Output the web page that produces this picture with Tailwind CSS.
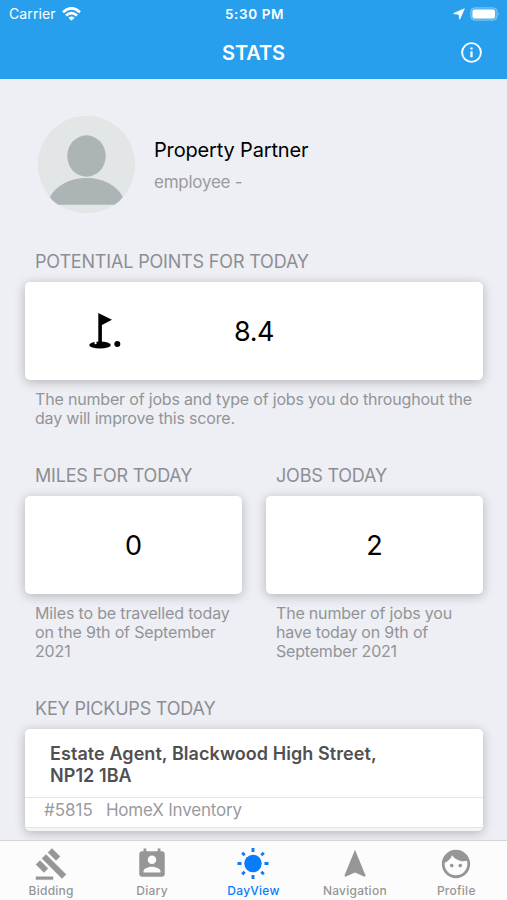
<!DOCTYPE html>
<html lang="en">
<head>
<meta charset="utf-8">
<title>Stats</title>
<script src="https://cdn.jsdelivr.net/npm/@tailwindcss/browser@4"></script>
</head>
<body class="bg-[#edeff4] font-['Inter',sans-serif]">
<div class="flex h-[900px] w-[507px] flex-col overflow-hidden">
  <header class="h-[79px] shrink-0 bg-[#279fec] text-white">
    <div class="grid h-[27px] grid-cols-3 items-center pl-[9px] pr-[7px] text-[13px]">
      <div class="flex items-center gap-[6px]">
        <span class="text-[14px] tracking-[0.1px]">Carrier</span>
        <svg class="h-[14px] w-[19px]" viewBox="0 0 19 14" fill="none" stroke="white" stroke-width="2.700"><path d="M1 5.200Q9.500-2.600 18 5.200M4 8.600Q9.500 3.600 15 8.600"/><path d="M9.500 13.700L6.400 10.700Q9.500 8.200 12.600 10.700Z" fill="white" stroke="none"/></svg>
      </div>
      <span class="pt-[1px] text-center text-[13.500px] font-semibold tracking-[0.600px]">5:30 PM</span>
      <div class="flex items-center justify-end gap-[5px]">
        <svg class="h-[12px] w-[12px]" viewBox="0 0 12 12" fill="white" stroke="white" stroke-width=".8" stroke-linejoin="round"><path d="M11.300.8L6.700 11.300 6 6.300.5 5.600Z"/></svg>
        <svg class="h-[14px] w-[30px]" viewBox="0 0 30 14"><rect x=".7" y=".7" width="26.500" height="12.600" rx="4" fill="white" fill-opacity=".2" stroke="white" stroke-opacity=".3"/><rect x="2.500" y="2.500" width="22.500" height="9" rx="2" fill="white"/><path d="M28.500 4.700q1.500 2.300 0 4.600z" fill="white" fill-opacity=".4"/></svg>
      </div>
    </div>
    <div class="grid h-[52px] grid-cols-3 items-center px-[25px]">
      <span></span>
      <h1 class="text-center text-[20px] font-semibold tracking-[-0.1px]">STATS</h1>
      <svg class="relative -top-px h-[21px] w-[21px] justify-self-end" viewBox="0 0 21 21" fill="none" stroke="white" stroke-width="1.900"><circle cx="10.500" cy="10.500" r="9.400"/><path d="M10.500 9.300v6M10.500 5.400v2.200" stroke-width="2.200"/></svg>
    </div>
  </header>

  <main class="min-h-0 flex-1 overflow-hidden pt-[37px] pr-[24px] pl-[25px]">
    <section class="flex items-center gap-[19px] pl-[12px]">
      <svg class="h-[98px] w-[98px]" viewBox="0 0 98 98"><circle cx="49.500" cy="48.500" r="48.700" fill="#e2e6e7"/><ellipse cx="49.500" cy="40" rx="19.200" ry="20.700" fill="#acb4b5"/><path d="M12.800 81C19.500 69 33.500 62 49.500 62S79.500 69 85.800 81Q82.500 86 77.500 88.700H21Q16 86 12.800 81Z" fill="#acb4b5"/></svg>
      <div class="pb-[1px]">
        <p class="text-[20px] leading-[26px] tracking-[-0.160px] text-black">Property Partner</p>
        <p class="mt-[8px] text-[17px] leading-[22px] tracking-[-0.250px] text-[#9a9b9f]">employee -</p>
      </div>
    </section>

    <section class="mt-[37px]">
      <h2 class="pl-[10px] text-[18px] leading-[22px] tracking-[-0.170px] text-[#8d8e92]">POTENTIAL POINTS FOR TODAY</h2>
      <div class="mt-[9px] grid h-[98px] grid-cols-[158px_142px_158px] items-center rounded-[5px] bg-white shadow-[0_2px_11px_rgba(0,0,0,0.25)]">
        <svg class="ml-[64px] h-[36px] w-[32px]" viewBox="0 0 32 36"><ellipse cx="11" cy="32" rx="10.800" ry="3.600"/><path d="M5.500 31.200V28h2v3" fill="white"/><path d="M9.300 0L23 6.800 12.900 12V32.500H9.300Z"/><circle cx="28.300" cy="31" r="3"/></svg>
        <span class="text-center text-[27px] leading-none tracking-[-0.400px] text-black">8.4</span>
      </div>
      <p class="mt-[10px] pl-[10px] text-[16px] leading-[19px] tracking-[-0.180px] whitespace-nowrap text-[#939498]">The number of jobs and type of jobs you do throughout the<br>day will improve this score.</p>
    </section>

    <div class="mt-[37px] grid grid-cols-2 gap-[24px]">
      <section>
        <h2 class="pl-[10px] text-[18px] leading-[22px] tracking-[-0.200px] text-[#8d8e92]">MILES FOR TODAY</h2>
        <div class="mt-[9px] flex h-[98px] items-center justify-center rounded-[5px] bg-white pt-[2px] text-[27px] shadow-[0_2px_11px_rgba(0,0,0,0.25)]">0</div>
        <p class="mt-[10px] pl-[10px] text-[16px] leading-[19px] tracking-[-0.160px] whitespace-nowrap text-[#939498]">Miles to be travelled today<br>on the 9th of September<br>2021</p>
      </section>
      <section>
        <h2 class="pl-[10px] text-[18px] leading-[22px] tracking-[-0.200px] text-[#8d8e92]">JOBS TODAY</h2>
        <div class="mt-[9px] flex h-[98px] items-center justify-center rounded-[5px] bg-white pt-[2px] text-[27px] shadow-[0_2px_11px_rgba(0,0,0,0.25)]">2</div>
        <p class="mt-[10px] pl-[10px] text-[16px] leading-[19px] tracking-[-0.190px] whitespace-nowrap text-[#939498]">The number of jobs you<br>have today on 9th of<br>September 2021</p>
      </section>
    </div>

    <section class="mt-[37px]">
      <h2 class="pl-[10px] text-[18px] leading-[22px] tracking-[-0.200px] text-[#8d8e92]">KEY PICKUPS TODAY</h2>
      <div class="mt-[9px] h-[102px] overflow-hidden rounded-[5px] bg-[#f4f5f6] shadow-[0_2px_11px_rgba(0,0,0,0.25)]">
        <p class="h-[68px] bg-white pt-[14px] pl-[25px] text-[18px] leading-[22px] font-semibold tracking-[0.070px] whitespace-nowrap text-[#505052]">Estate Agent, Blackwood High Street,<br>NP12 1BA</p>
        <div class="flex h-[31px] items-center gap-[13px] border-y border-y-[#e4e5e7] bg-white pb-[4px] pl-[19px] text-[17px] text-[#9a9b9f]"><span>#5815</span><span class="tracking-[-0.200px]">HomeX Inventory</span></div>
      </div>
    </section>
  </main>

  <nav class="grid h-[60px] shrink-0 grid-cols-5 border-t border-[#d5d6da] bg-[#fcfcfd] text-[12px] leading-[16px] font-medium tracking-[0.250px] text-[#969696]">
    <a class="flex flex-col items-center pt-[6px] pl-[1px]"><svg class="h-[34px] w-[34px]" viewBox="0 0 24 24" fill="currentColor" stroke="currentColor" stroke-width=".3"><path d="M1 21h12v2H1zM5.245 8.070l2.830-2.827 14.140 14.142-2.828 2.828zM12.317 1l5.657 5.656-2.830 2.830-5.654-5.660zM3.825 9.485l5.657 5.657-2.828 2.828-5.657-5.657z" transform="translate(.4 0)"/></svg><span class="mt-[2px]">Bidding</span></a>
    <a class="flex flex-col items-center pt-[6px]"><svg class="h-[34px] w-[34px]" viewBox="0 0 24 24" fill="currentColor"><path d="M19 3h-1V1h-2v2H8V1H6v2H5c-1.110 0-2 .9-2 2v14c0 1.100.89 2 2 2h14c1.100 0 2-.9 2-2V5c0-1.100-.9-2-2-2zm-7 3c1.660 0 3 1.340 3 3s-1.340 3-3 3-3-1.340-3-3 1.340-3 3-3zm6 12H6v-1c0-2 4-3.100 6-3.100s6 1.100 6 3.100v1z"/></svg><span class="mt-[2px]">Diary</span></a>
    <a class="flex flex-col items-center pt-[6px] text-[#087cfb]"><svg class="h-[34px] w-[34px]" viewBox="0 0 34 34" fill="currentColor" stroke="currentColor"><circle cx="17" cy="16.500" r="8.700" stroke="none"/><path d="M17 1v4M17 28v4M1.500 16.500h4M28.500 16.500h4M6.200 5.700l2.500 2.500M25.300 24.800l2.500 2.500M27.800 5.700l-2.500 2.500M8.700 24.800l-2.500 2.500" stroke-width="2.900"/></svg><span class="mt-[2px]">DayView</span></a>
    <a class="flex flex-col items-center pt-[6px]"><svg class="h-[34px] w-[34px]" viewBox="0 0 24 24" fill="currentColor"><path d="M12 2L4.500 20.290l.71.71L12 18l6.790 3 .71-.71z"/></svg><span class="mt-[2px]">Navigation</span></a>
    <a class="flex flex-col items-center pt-[6px]"><svg class="h-[34px] w-[34px]" viewBox="0 0 24 24" fill="currentColor"><path d="M9 11.750c-.69 0-1.250.56-1.250 1.250s.56 1.250 1.250 1.250 1.250-.56 1.250-1.250-.56-1.250-1.250-1.250zm6 0c-.69 0-1.250.56-1.250 1.250s.56 1.250 1.250 1.250 1.250-.56 1.250-1.250-.56-1.250-1.250-1.250zM12 2C6.480 2 2 6.480 2 12s4.480 10 10 10 10-4.480 10-10S17.520 2 12 2zm0 18c-4.410 0-8-3.590-8-8 0-.29.02-.58.05-.86 2.360-1.050 4.230-2.980 5.210-5.370C11.070 8.330 14.050 10 17.420 10c.78 0 1.530-.09 2.250-.26.21.71.33 1.470.33 2.260 0 4.410-3.590 8-8 8z"/></svg><span class="mt-[2px]">Profile</span></a>
  </nav>
</div>
</body>
</html>
